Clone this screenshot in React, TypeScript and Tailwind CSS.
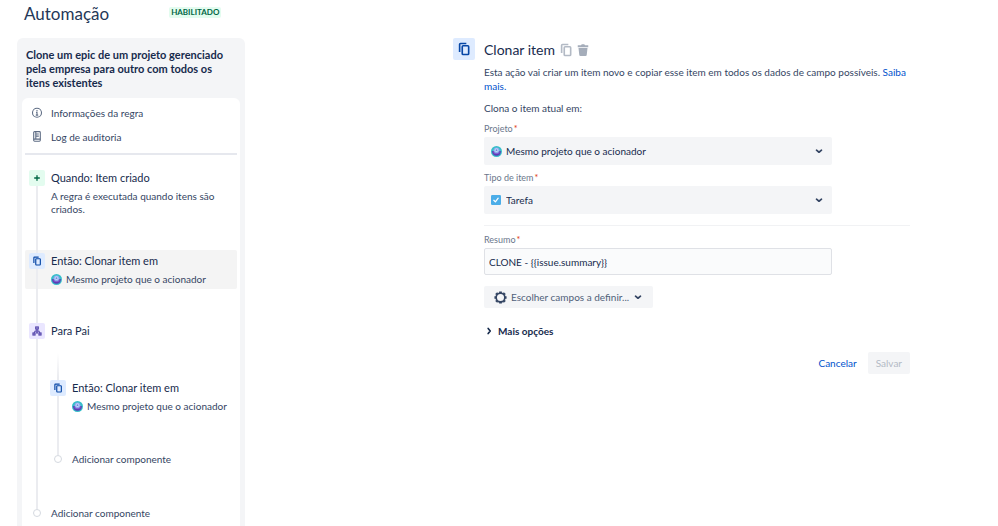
import React from 'react';

interface IconProps {
    className?: string;
}

const CopyIcon: React.FC<IconProps> = ({ className }) => (
    <svg viewBox="0 0 24 24" className={className} fill="none" stroke="currentColor" strokeWidth={2.8} aria-hidden="true">
        <rect x="9" y="6.500" width="11" height="15" rx="1.500" />
        <path d="M4.500 17V4A1.500 1.500 0 0 1 6 2.500h10" />
    </svg>
);

const TrashIcon: React.FC<IconProps> = ({ className }) => (
    <svg viewBox="0 0 24 24" className={className} fill="currentColor" aria-hidden="true">
        <path d="M1.500 2.500H8L9.500.5h5L16 2.500h6.500V6.500h-21V2.500ZM3 8h18L19.500 21.500A2.500 2.500 0 0 1 17 24H7a2.500 2.500 0 0 1-2.500-2.500L3 8Z" />
    </svg>
);

const InfoIcon: React.FC<IconProps> = ({ className }) => (
    <svg viewBox="0 0 20 20" className={className} fill="none" stroke="currentColor" strokeWidth={1.8} aria-hidden="true">
        <circle cx="10" cy="9.500" r="7.500" />
        <path d="M8.500 9H10v4.500M8 13.500h4M10 5v2" />
    </svg>
);

const LogIcon: React.FC<IconProps> = ({ className }) => (
    <svg viewBox="0 0 20 20" className={className} fill="none" stroke="currentColor" strokeWidth={1.8} aria-hidden="true">
        <rect x="4.500" y="1" width="11" height="16" rx="1.500" />
        <path d="M8 1.500V13M8 5h5M8 8.500h5M4.500 13.500h11" />
    </svg>
);

const PlusIcon: React.FC<IconProps> = ({ className }) => (
    <svg viewBox="0 0 12 12" className={className} fill="none" stroke="currentColor" strokeWidth={2} strokeLinecap="round" aria-hidden="true">
        <path d="M6 2.500v7M2.500 6h7" />
    </svg>
);

const BranchIcon: React.FC<IconProps> = ({ className }) => (
    <svg viewBox="0 0 20 20" className={className} fill="none" stroke="currentColor" strokeWidth={2.4} aria-hidden="true">
        <rect x="7.500" y="2" width="5" height="4" />
        <rect x="2" y="14" width="4" height="4" />
        <rect x="14" y="14" width="4" height="4" />
        <path d="M10 6v8M4.500 13.500l2-3.500h7l2 3.500M8 14h4" />
    </svg>
);

const ChevronIcon: React.FC<IconProps> = ({ className }) => (
    <svg viewBox="0 0 12 12" className={className} fill="none" stroke="currentColor" strokeWidth={2} strokeLinecap="round" strokeLinejoin="round" aria-hidden="true">
        <path d="M3 5 6 7.500 9 5" />
    </svg>
);

const GearIcon: React.FC<IconProps> = ({ className }) => (
    <svg viewBox="0 0 24 24" className={className} fill="none" stroke="currentColor" aria-hidden="true">
        <circle cx="12" cy="12" r="8" strokeWidth={3} />
        <path
            strokeWidth={5}
            d="M12 .8v3M12 20.200v3M.8 12h3M20.200 12h3M4 4l2 2M18 18l2 2M4 20l2-2M18 6l2-2"
        />
    </svg>
);

const ProjectAvatar: React.FC<IconProps> = ({ className }) => (
    <svg viewBox="0 0 24 24" className={className} aria-hidden="true">
        <circle cx="12" cy="12" r="12" fill="#35bfc9" />
        <path d="M2.500 11h19c.5 6-3.500 10.500-9.500 10.500S2 17 2.500 11Z" fill="#5b3fb5" />
        <circle cx="12" cy="9.500" r="6.500" fill="#8fa9ee" />
        <circle cx="12" cy="9" r="4" fill="#c5d6fb" />
        <circle cx="12" cy="9" r="2" fill="#6f86d8" />
        <path d="M5 13.500c4 2.500 10 2.500 14 0v2c-4 2.500-10 2.500-14 0v-2Z" fill="#8a5fd6" />
    </svg>
);

const TaskIcon: React.FC<IconProps> = ({ className }) => (
    <svg viewBox="0 0 16 16" className={className} aria-hidden="true">
        <rect width="16" height="16" rx="2" fill="#4bade8" />
        <path d="M4.500 8.500 7 11l4.500-6" fill="none" stroke="#fff" strokeWidth={2} strokeLinecap="round" strokeLinejoin="round" />
    </svg>
);

const Rail: React.FC<{ className: string }> = ({ className }) => <span className={`w-0.5 ${className}`} />;

interface StepProps {
    icon: React.ReactNode;
    tone: string;
    title: string;
    first?: boolean;
    selected?: boolean;
    children?: React.ReactNode;
}

const Step: React.FC<StepProps> = ({ icon, tone, title, first, selected, children }) => (
    <div className={`flex gap-1.5 rounded-xs pl-1 ${selected ? 'bg-[#f4f4f4]' : ''}`}>
        <div className="flex w-4 shrink-0 flex-col items-center">
            <Rail className={first ? 'h-[3px]' : 'h-[3px] bg-[#ebecf0]'} />
            <span className={`flex size-4 shrink-0 items-center justify-center rounded-xs ${tone}`}>{icon}</span>
            <Rail className="flex-1 bg-[#ebecf0]" />
        </div>
        <div className="min-w-0 flex-1 pt-[3px]">
            <h3 className="text-[11px] leading-4 text-[#172b4d]">{title}</h3>
            {children}
        </div>
    </div>
);

const SameProject = () => (
    <p className="flex items-center gap-1 pt-1 pb-1 text-[10px] leading-3">
        <ProjectAvatar className="size-[11px] shrink-0" />
        Mesmo projeto que o acionador
    </p>
);

const AddComponent = () => (
    <button type="button" className="flex items-start gap-1.5 px-1 text-[10px] leading-4">
        <span className="flex w-4 flex-col items-center">
            <Rail className="h-1 bg-[#ebecf0]" />
            <span className="size-2 rounded-full border border-[#d5d9e0] bg-white" />
        </span>
        Adicionar componente
    </button>
);

const Sidebar = () => (
    <aside className="flex w-[228px] shrink-0 flex-col rounded-t-md bg-[#f4f5f7] px-[5px]">
        <h2 className="px-1 pt-2.5 pb-2 text-[11px] leading-[14px] font-bold text-[#172b4d]">
            Clone um epic de um projeto gerenciado pela empresa para outro com todos os itens existentes
        </h2>
        <div className="flex-1 rounded-t-md bg-white px-[3px]">
            <nav className="flex flex-col gap-2 border-b-2 border-[#e6e8ee] px-1.5 pt-[7px] pb-2 text-[10px] leading-4">
                <a href="#info" className="flex items-center gap-2">
                    <InfoIcon className="size-3 text-[#5e6c84]" />
                    Informações da regra
                </a>
                <a href="#log" className="flex items-center gap-2">
                    <LogIcon className="size-3 text-[#5e6c84]" />
                    Log de auditoria
                </a>
            </nav>
            <div className="flex flex-col pt-3">
                <Step first icon={<PlusIcon className="size-2" />} tone="bg-[#e3fcef] text-[#006644]" title="Quando: Item criado">
                    <p className="pt-1 pb-[34px] text-[10px] leading-[13px]">A regra é executada quando itens são criados.</p>
                </Step>
                <Step selected icon={<CopyIcon className="size-2.5" />} tone="bg-[#deebff] text-[#0747a6]" title="Então: Clonar item em">
                    <SameProject />
                </Step>
                <div className="flex px-[11px]">
                    <Rail className="h-[31px] bg-[#ebecf0]" />
                </div>
                <Step icon={<BranchIcon className="size-2.5" />} tone="bg-[#eae6ff] text-[#5243aa]" title="Para Pai">
                    <div className="-ml-[5px] pt-[14px] pb-[38px]">
                        <div className="flex px-[11px]">
                            <Rail className="h-6 bg-linear-to-b from-white to-[#ebecf0]" />
                        </div>
                        <Step icon={<CopyIcon className="size-2.5" />} tone="bg-[#deebff] text-[#0747a6]" title="Então: Clonar item em">
                            <SameProject />
                        </Step>
                        <div className="flex px-[11px]">
                            <Rail className="h-[35px] bg-[#ebecf0]" />
                        </div>
                        <AddComponent />
                    </div>
                </Step>
                <AddComponent />
            </div>
        </div>
    </aside>
);

const FieldLabel: React.FC<{ htmlFor: string; text: string }> = ({ htmlFor, text }) => (
    <label htmlFor={htmlFor} className="block text-[9px] leading-4 text-[#6b778c]">
        {text}
        <span className="pl-px text-[#de350b]">*</span>
    </label>
);

interface SelectFieldProps {
    id: string;
    label: string;
    value: string;
    icon: React.ReactNode;
}

const SelectField: React.FC<SelectFieldProps> = ({ id, label, value, icon }) => (
    <div>
        <FieldLabel htmlFor={id} text={label} />
        <div className="relative">
            <span className="absolute inset-y-0 left-[7px] flex items-center">{icon}</span>
            <select id={id} className="block h-7 w-full appearance-none rounded-xs bg-[#f4f5f7] pr-6 pl-[22px] text-[10px] text-[#172b4d]">
                <option>{value}</option>
            </select>
            <span className="pointer-events-none absolute inset-y-0 right-2 flex items-center">
                <ChevronIcon className="size-2.5 text-[#344563]" />
            </span>
        </div>
    </div>
);

const ActionForm = () => (
    <main className="flex flex-1 items-start gap-[9px] pr-[88px] pl-[208px]">
        <span className="flex size-[22px] shrink-0 items-center justify-center rounded-xs bg-[#deebff] text-[#0747a6]">
            <CopyIcon className="size-[14px]" />
        </span>
        <form className="min-w-0 flex-1">
            <div className="flex h-[23px] items-center gap-1">
                <h2 className="text-sm text-[#172b4d]">Clonar item</h2>
                <button type="button" aria-label="Duplicar" className="text-[#b3bac5]">
                    <CopyIcon className="size-[14px]" />
                </button>
                <button type="button" aria-label="Excluir" className="text-[#a5adba]">
                    <TrashIcon className="size-3" />
                </button>
            </div>
            <p className="pt-1 text-[10px] leading-[14px]">
                Esta ação vai criar um item novo e copiar esse item em todos os dados de campo possíveis.{' '}
                <a href="#saiba-mais" className="text-[#0052cc]">Saiba mais.</a>
            </p>
            <p className="pt-2 pb-[6px] text-[10px] leading-[14px]">Clona o item atual em:</p>
            <div className="flex max-w-[348px] flex-col gap-[5px]">
                <SelectField id="projeto" label="Projeto" value="Mesmo projeto que o acionador" icon={<ProjectAvatar className="size-[11px]" />} />
                <SelectField id="tipo" label="Tipo de item" value="Tarefa" icon={<TaskIcon className="size-2.5" />} />
            </div>
            <hr className="mt-[11px] mb-1.5 border-[#f1f2f4]" />
            <div className="max-w-[348px]">
                <FieldLabel htmlFor="resumo" text="Resumo" />
                <input
                    id="resumo"
                    type="text"
                    defaultValue="CLONE - {{issue.summary}}"
                    className="block h-[27px] w-full rounded-xs border border-[#dfe1e6] bg-[#fafbfc] px-1 text-[10px] text-[#172b4d]"
                />
            </div>
            <button type="button" className="mt-[11px] flex h-[22px] items-center rounded-xs bg-[#f4f5f7] px-2.5 text-[10px] text-[#505f79]">
                <GearIcon className="mr-1 size-[13px] text-[#344563]" />
                Escolher campos a definir...
                <ChevronIcon className="ml-1 size-2.5 text-[#344563]" />
            </button>
            <button type="button" className="mt-[15px] flex items-center gap-1 text-[10px] leading-4 font-bold text-[#172b4d]">
                <ChevronIcon className="size-2.5 -rotate-90" />
                Mais opções
            </button>
            <div className="mt-[13px] flex h-[22px] justify-end gap-[3px] text-[10px]">
                <button type="button" className="px-2 text-[#0052cc]">Cancelar</button>
                <button type="submit" disabled className="rounded-xs bg-[#f4f5f7] px-2 text-[#b3bac5]">Salvar</button>
            </div>
        </form>
    </main>
);

export default function App() {
    return (
        <div className="flex min-h-screen flex-col bg-white font-['Lato','Noto_Sans',sans-serif] text-[#344563]">
            <header className="flex h-[38px] items-start gap-[60px] pl-6">
                <h1 className="text-[17px] leading-7 text-[#253858]">Automação</h1>
                <span className="mt-[7px] rounded-xs bg-[#e3fcef] px-0.5 text-[8px] leading-[11px] font-bold text-[#006644]">HABILITADO</span>
            </header>
            <div className="flex flex-1 pl-[17px]">
                <Sidebar />
                <ActionForm />
            </div>
        </div>
    );
}
